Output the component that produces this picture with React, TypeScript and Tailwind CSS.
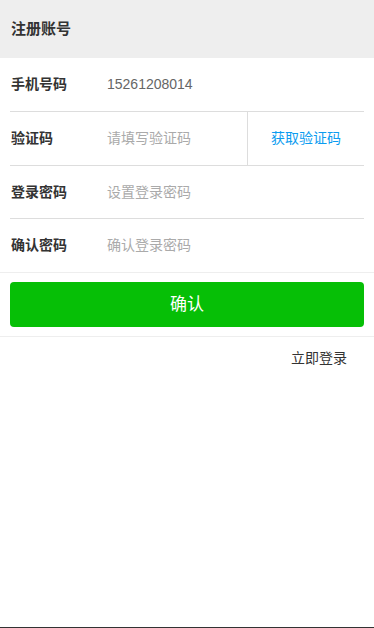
import { useState } from "react";

const font = "font-['Liberation_Sans','Noto_Sans_CJK_SC',sans-serif]";

function Row({
    label,
    children,
    className,
}: {
    label: string;
    children: React.ReactNode;
    className: string;
}) {
    return (
        <div className={"mx-[10px] flex items-stretch " + className}>
            <div className="flex w-[97px] shrink-0 items-center pl-px text-[14px] font-bold text-[#333333]">
                {label}
            </div>
            {children}
        </div>
    );
}

export default function App() {
    const [phone, setPhone] = useState("15261208014");
    const [code, setCode] = useState("");
    const [pwd, setPwd] = useState("");
    const [pwd2, setPwd2] = useState("");

    const inputCls =
        "min-w-0 flex-1 bg-transparent text-[14px] text-[#666666] outline-none placeholder:text-[#aaaaaa] " + font;

    return (
        <div className={"flex h-[628px] flex-col border-b border-[#333333] bg-white " + font}>
            <div className="flex h-[58px] shrink-0 items-center bg-[#eeeeee] px-[11px] text-[15px] font-bold text-[#333333]">
                注册账号
            </div>

            <div className="shrink-0 border-b border-[#eeeeee]">
                <Row label="手机号码" className="h-[54px] border-b border-[#dddddd]">
                    <input className={inputCls} value={phone} onChange={(e) => setPhone(e.target.value)} />
                </Row>
                <Row label="验证码" className="h-[54px] border-b border-[#dddddd]">
                    <input
                        className={inputCls}
                        placeholder="请填写验证码"
                        value={code}
                        onChange={(e) => setCode(e.target.value)}
                    />
                    <button className="flex w-[117px] shrink-0 items-center justify-center border-l border-[#dddddd] text-[14px] text-[#0c9cf0]">
                        获取验证码
                    </button>
                </Row>
                <Row label="登录密码" className="h-[53px] border-b border-[#dddddd]">
                    <input
                        type="text"
                        className={inputCls}
                        placeholder="设置登录密码"
                        value={pwd}
                        onChange={(e) => setPwd(e.target.value)}
                    />
                </Row>
                <Row label="确认密码" className="h-[53px]">
                    <input
                        type="text"
                        className={inputCls}
                        placeholder="确认登录密码"
                        value={pwd2}
                        onChange={(e) => setPwd2(e.target.value)}
                    />
                </Row>
            </div>

            <div className="shrink-0 border-b border-[#eeeeee] px-[10px] py-[9px]">
                <button className="flex h-[45px] w-full items-center justify-center rounded-[4px] bg-[#06bf06] text-[17px] text-white">
                    确认
                </button>
            </div>

            <div className="flex h-[42px] shrink-0 items-center justify-end pr-[27px] text-[14px] text-[#333333]">
                立即登录
            </div>

            <div className="flex-1" />
        </div>
    );
}
